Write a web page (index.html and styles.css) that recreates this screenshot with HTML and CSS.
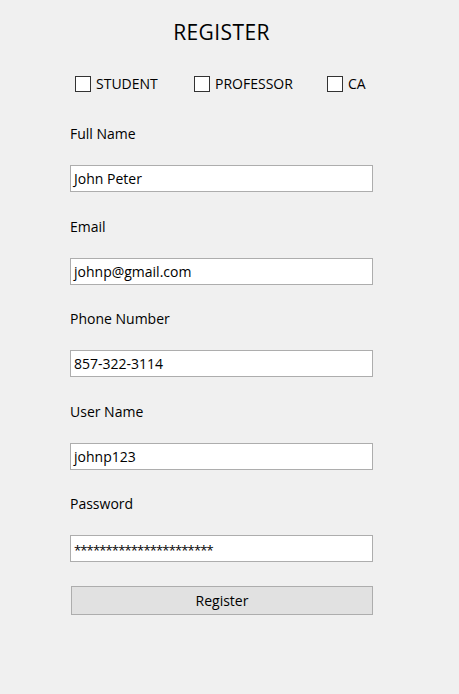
FILE: index.html
```html
<!DOCTYPE html>
<html>
<head>
<meta charset="utf-8">
<link rel="stylesheet" href="styles.css">
</head>
<body>
<div class="form">
  <h1 class="title">REGISTER</h1>
  <div class="roles">
    <label class="role role-student"><span class="box"></span><span>STUDENT</span></label>
    <label class="role role-prof"><span class="box"></span><span>PROFESSOR</span></label>
    <label class="role"><span class="box"></span><span>CA</span></label>
  </div>
  <div class="field">
    <div class="label">Full Name</div>
    <div class="input">John Peter</div>
  </div>
  <div class="field">
    <div class="label">Email</div>
    <div class="input">johnp@gmail.com</div>
  </div>
  <div class="field">
    <div class="label">Phone Number</div>
    <div class="input">857-322-3114</div>
  </div>
  <div class="field">
    <div class="label">User Name</div>
    <div class="input">johnp123</div>
  </div>
  <div class="field">
    <div class="label">Password</div>
    <div class="input pw">**********************</div>
  </div>
  <div class="button">Register</div>
</div>
</body>
</html>
```

FILE: styles.css
```css
html, body {
  margin: 0;
  padding: 0;
  background: #f0f0f0;
}
body {
  font-family: "Open Sans", "Noto Sans", sans-serif;
  font-size: 14px;
  color: #000;
  width: 459px;
  height: 694px;
}
.form {
  margin-left: 70px;
  width: 303px;
  padding-top: 18px;
}
.title {
  margin: 0;
  font-weight: normal;
  font-size: 21px;
  line-height: 28px;
  height: 28px;
  text-align: center;
  letter-spacing: 0.4px;
}
.roles {
  display: flex;
  margin-top: 30px;
  margin-left: 5px;
  height: 16px;
  align-items: center;
}
.role {
  display: flex;
  align-items: center;
  gap: 5px;
  line-height: 16px;
}
.role-student { width: 119px; }
.role-prof { width: 133px; }
.box {
  width: 14px;
  height: 14px;
  border: 1px solid #333;
  background: #fff;
  flex: none;
}
.field {
  margin-top: 32px;
}
.field + .field {
  margin-top: 24.5px;
}
.label {
  line-height: 20px;
  height: 20px;
}
.input {
  margin-top: 21px;
  height: 25px;
  border: 1px solid #adadad;
  background: #fff;
  line-height: 25px;
  padding-left: 3px;
  white-space: nowrap;
  overflow: hidden;
}
.pw {
  font-size: 13px;
  letter-spacing: -0.85px;
  line-height: 29px;
  height: 25px;
}
.button {
  margin-top: 24px;
  margin-left: 1px;
  height: 27px;
  border: 1px solid #adadad;
  background: #e1e1e1;
  text-align: center;
  line-height: 27px;
}
```
